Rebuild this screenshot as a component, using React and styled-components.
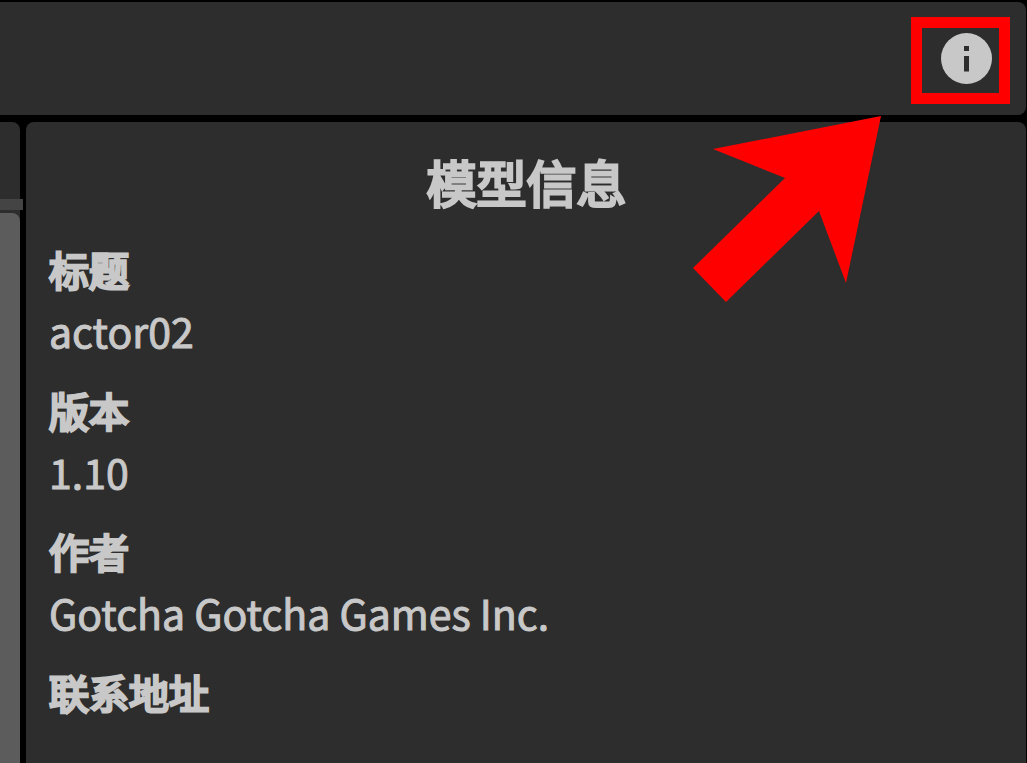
import React from "react";
import styled, { createGlobalStyle } from "styled-components";

const GlobalStyle = createGlobalStyle`
  * { box-sizing: border-box; }
  body {
    margin: 0;
    background: #000;
    color: #c8c8c8;
    font-family: "Noto Sans CJK SC", "Noto Sans", sans-serif;
  }
`;

const Page = styled.div`
  position: relative;
  display: flex;
  flex-direction: column;
  gap: 7px;
  min-height: 100vh;
  padding: 2px 1px 0 0;
  overflow: hidden;
`;

const Toolbar = styled.header`
  display: flex;
  align-items: center;
  justify-content: flex-end;
  height: 113px;
  padding-right: 34px;
  background: #2d2d2d;
  border-radius: 0 8px 8px 0;
`;

const InfoButton = styled.button`
  display: flex;
  padding: 0;
  border: 0;
  background: none;
  color: #c8c8c8;
  cursor: pointer;
`;

const Columns = styled.div`
  display: flex;
  flex: 1;
  gap: 6px;
`;

const SideColumn = styled.aside`
  display: flex;
  flex-direction: column;
  width: 20px;
`;

const SideHeader = styled.div`
  height: 77px;
  background: #2d2d2d;
  border-radius: 0 8px 0 0;
`;

const SideDivider = styled.div`
  width: 23px;
  height: 11px;
  background: #444;
`;

const SideWell = styled.div`
  display: flex;
  flex: 1;
  padding-top: 3px;
  background: #2d2d2d;
`;

const SideBody = styled.div`
  flex: 1;
  background: #5c5c5c;
  border-radius: 0 8px 0 0;
`;

const Panel = styled.main`
  flex: 1;
  padding: 23px 22px 0 23px;
  background: #2d2d2d;
  border-radius: 8px 8px 0 0;
`;

const PanelTitle = styled.h1`
  margin: 0 0 22px;
  font-size: 50px;
  line-height: 72px;
  font-weight: 400;
  text-align: center;
  -webkit-text-stroke: 3px currentColor;
`;

const Details = styled.dl`
  display: flex;
  flex-direction: column;
  gap: 19px;
  margin: 0;
`;

const Label = styled.dt`
  font-size: 40px;
  line-height: 60px;
  -webkit-text-stroke: 3px currentColor;
`;

const Value = styled.dd`
  margin: 0;
  font-size: 41px;
  line-height: 62px;
  -webkit-text-stroke: 1px currentColor;
`;

const Highlight = styled.div`
  position: absolute;
  top: 17px;
  right: 17px;
  width: 99px;
  height: 87px;
  border: 11px solid #f00;
  pointer-events: none;
`;

const Pointer = styled.svg`
  position: absolute;
  top: 116px;
  right: 146px;
  pointer-events: none;
`;

const details = [
  { label: "标题", value: "actor02" },
  { label: "版本", value: "1.10" },
  { label: "作者", value: "Gotcha Gotcha Games Inc." },
  { label: "联系地址", value: "" },
];

function InfoIcon() {
  return (
    <svg width="52" height="52" viewBox="0 0 52 52" aria-hidden="true">
      <circle cx="26.5" cy="25.5" r="25.5" fill="currentColor" />
      <rect x="24" y="13" width="5" height="5" fill="#2d2d2d" />
      <rect x="24" y="23" width="5" height="15.5" fill="#2d2d2d" />
    </svg>
  );
}

export default function App() {
  return (
    <>
      <GlobalStyle />
      <Page>
        <Toolbar>
          <InfoButton type="button" aria-label="模型信息">
            <InfoIcon />
          </InfoButton>
        </Toolbar>
        <Columns>
          <SideColumn>
            <SideHeader />
            <SideDivider />
            <SideWell>
              <SideBody />
            </SideWell>
          </SideColumn>
          <Panel>
            <PanelTitle>模型信息</PanelTitle>
            <Details>
              {details.map(({ label, value }) => (
                <div key={label}>
                  <Label>{label}</Label>
                  {value && <Value>{value}</Value>}
                </div>
              ))}
            </Details>
          </Panel>
        </Columns>
        <Highlight />
        <Pointer width="188" height="186" viewBox="0 0 188 186" aria-hidden="true">
          <path d="M188 0 L20 33 L92 62 L0 152 L33 186 L126 95 L153 167 Z" fill="#f00" />
        </Pointer>
      </Page>
    </>
  );
}
